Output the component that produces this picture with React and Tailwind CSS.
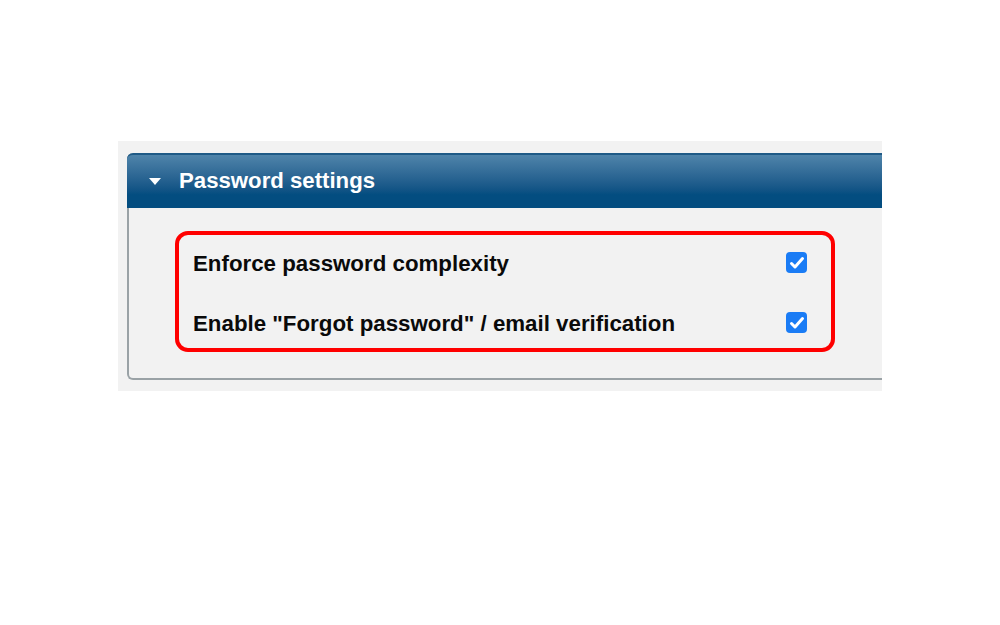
export default function App() {
  const rows = [
    { label: "Enforce password complexity" },
    { label: 'Enable "Forgot password" / email verification' },
  ];

  return (
    <div className="w-[1000px] h-[625px] bg-white pt-[141px] pl-[118px] font-['Liberation_Sans',Arial,sans-serif]">
      <div className="w-[764px] h-[250px] bg-[#f2f2f2] pt-[12px] pl-[9px] overflow-hidden">
        {/* Panel */}
        <div className="w-[800px] h-[227px] rounded-[6px] border-l-2 border-b-2 border-[#9aa2a6]">
          <div className="h-[55px] -ml-[2px] rounded-tl-[6px] border-t-2 border-[#1f5a86] bg-gradient-to-b from-[#4f84aa] to-[#034d80] to-[75%] flex items-center pl-[22px]">
            <svg width="12" height="8" viewBox="0 0 12 8" className="mr-[18px] mt-[1px]">
              <path d="M0 0 L12 0 L6 7 Z" fill="#ffffff" />
            </svg>
            <span className="text-white font-bold text-[22.2px] leading-none">Password settings</span>
          </div>

          <div className="pt-[23px] pl-[46px]">
            <div className="w-[660px] h-[121px] rounded-[13px] border-4 border-[#ff0000] pl-[14px] pr-[24px] pt-[2px] flex flex-col justify-center gap-[39px]">
              {rows.map((r) => (
                <div key={r.label} className="flex items-center justify-between h-[21px]">
                  <span className="text-[22.3px] font-bold text-[#0a0a0a] leading-none translate-y-[2px]">{r.label}</span>
                  <span className="w-[21px] h-[21px] rounded-[4px] bg-[#1a7cf5] flex items-center justify-center">
                    <svg width="16" height="14" viewBox="0 0 16 14">
                      <path d="M2.5 7.5 L6 11 L13.5 2.5" stroke="#fff" strokeWidth="3" fill="none" strokeLinecap="round" strokeLinejoin="round" />
                    </svg>
                  </span>
                </div>
              ))}
            </div>
          </div>
        </div>
      </div>
    </div>
  );
}
